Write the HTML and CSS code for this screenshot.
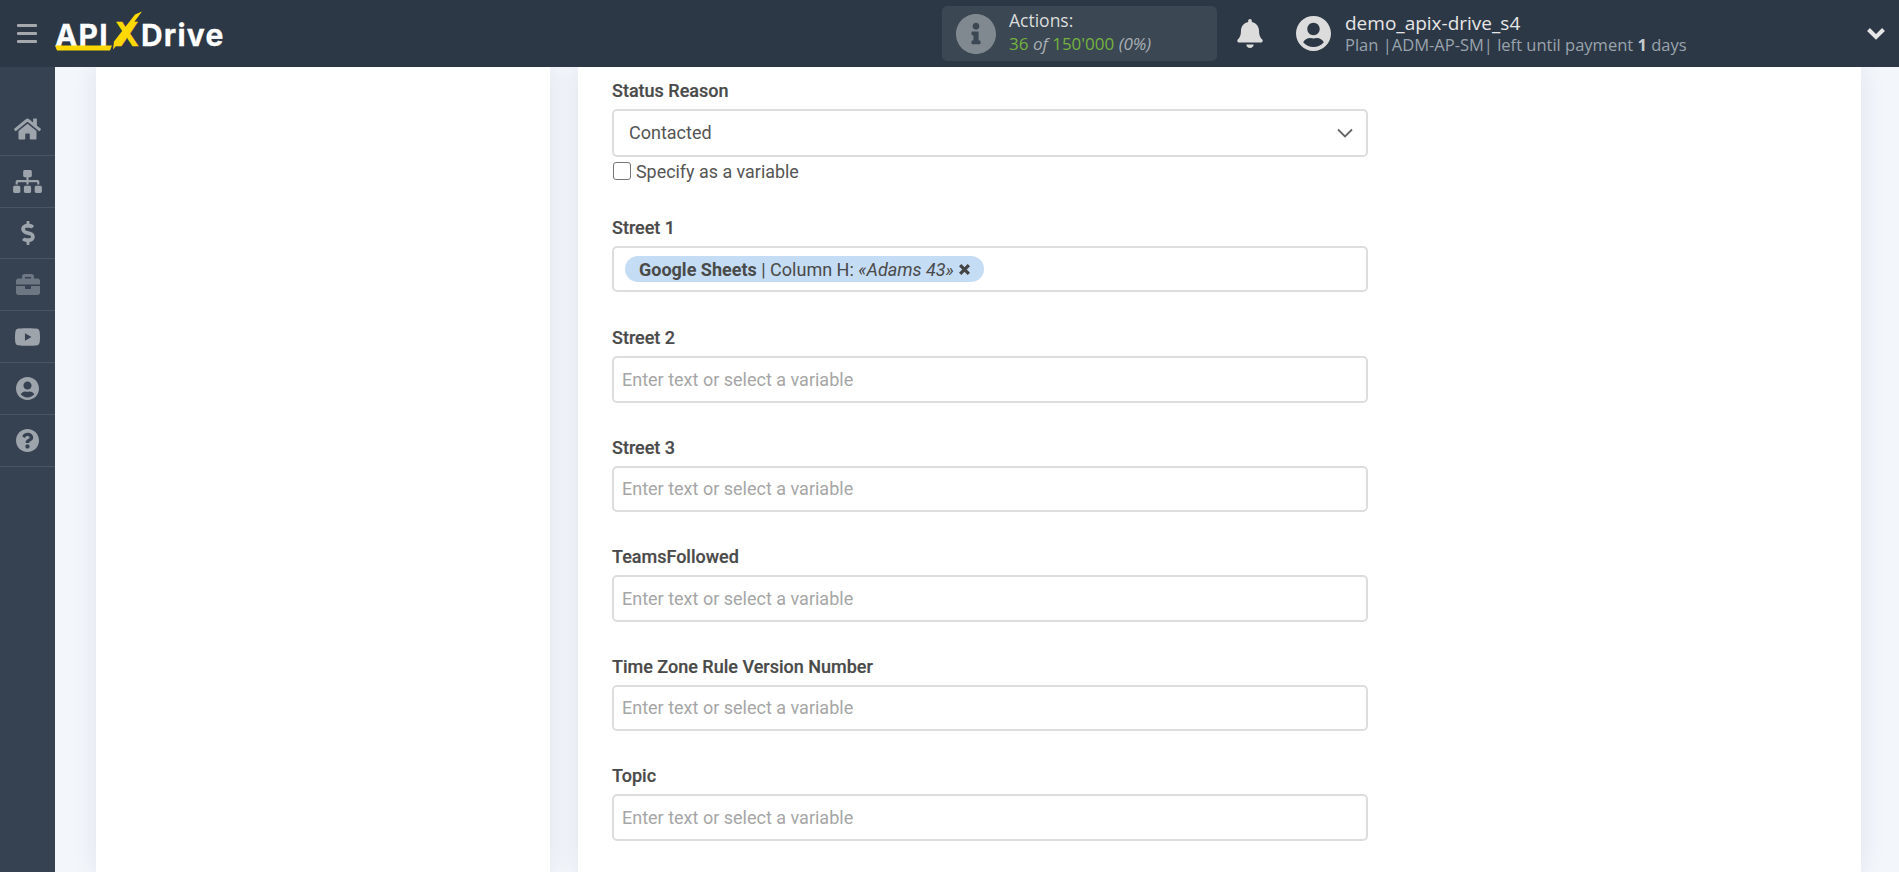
FILE: index.html
```html
<!DOCTYPE html>
<html lang="en">
<head>
<meta charset="utf-8">
<title>ApiX-Drive</title>
<link rel="stylesheet" href="styles.css">
</head>
<body>
<header class="topbar">
  <div class="topbar-left">
    <div class="burger"><span></span><span></span><span></span></div>
    <div class="logo">
      <span class="logo-api">API</span><span class="logo-x">X</span><span class="logo-drive">Drive</span>
      <svg class="logo-marks" viewBox="0 0 170 40" aria-hidden="true">
        <polygon points="0,31.5 57,31.5 55,36.5 2,36.5" fill="#ffd800"/>
        <polygon points="58,35.5 59,27.5 80,0.5 87,-2.5 64,28.5" fill="#ffd800"/>
      </svg>
    </div>
  </div>
  <div class="topbar-right">
    <div class="actions">
      <svg class="actions-icon" viewBox="8 8 496 496"><path d="M256 8C119.043 8 8 119.083 8 256c0 136.997 111.043 248 248 248s248-111.003 248-248C504 119.083 392.957 8 256 8zm0 110c23.196 0 42 18.804 42 42s-18.804 42-42 42-42-18.804-42-42 18.804-42 42-42zm56 254c0 6.627-5.373 12-12 12h-88c-6.627 0-12-5.373-12-12v-24c0-6.627 5.373-12 12-12h12v-64h-12c-6.627 0-12-5.373-12-12v-24c0-6.627 5.373-12 12-12h64c6.627 0 12 5.373 12 12v100h12c6.627 0 12 5.373 12 12v24z"/></svg>
      <div class="actions-text">
        <div class="actions-title">Actions:</div>
        <div class="actions-count"><span class="green">36</span> <em>of</em> <span class="green">150'000</span> <em>(0%)</em></div>
      </div>
    </div>
    <svg class="bell" viewBox="0 0 448 512"><path d="M224 512c35.32 0 63.97-28.65 63.97-64H160.03c0 35.35 28.65 64 63.97 64zm215.39-149.71c-19.32-20.76-55.47-51.99-55.47-154.29 0-77.7-54.48-139.9-127.94-155.16V32c0-17.67-14.32-32-31.98-32s-31.98 14.33-31.98 32v20.84C118.56 68.1 64.08 130.3 64.08 208c0 102.3-36.15 133.53-55.47 154.29-6 6.45-8.66 14.16-8.61 21.71.11 16.4 12.98 32 32.1 32h383.8c19.12 0 32-15.6 32.1-32 .05-7.55-2.61-15.27-8.61-21.71z"/></svg>
    <svg class="avatar" viewBox="0 8 496 496"><path d="M248 8C111 8 0 119 0 256s111 248 248 248 248-111 248-248S385 8 248 8zm0 96c48.6 0 88 39.4 88 88s-39.4 88-88 88-88-39.4-88-88 39.4-88 88-88zm0 344c-58.7 0-111.3-26.6-146.5-68.2 18.8-35.4 55.6-59.8 98.5-59.8 2.4 0 4.8.4 7.1 1.1 13 4.2 26.6 6.9 40.9 6.9 14.3 0 28-2.7 40.9-6.9 2.3-.7 4.7-1.1 7.1-1.1 42.9 0 79.7 24.4 98.5 59.8C359.3 421.4 306.7 448 248 448z"/></svg>
    <div class="user">
      <div class="user-name">demo_apix-drive_s4</div>
      <div class="user-plan">Plan |ADM-AP-SM| left until payment <b>1</b> days</div>
    </div>
    <svg class="user-chevron" viewBox="0 0 20 14"><polyline points="2.5,2.5 10,10 17.5,2.5"/></svg>
  </div>
</header>

<div class="body-row">
  <nav class="sidebar">
    <a class="nav-item"><svg class="nav-home" viewBox="0 0 576 512"><path d="M280.37 148.26L96 300.11V464a16 16 0 0 0 16 16l112.06-.29a16 16 0 0 0 15.92-16V368a16 16 0 0 1 16-16h64a16 16 0 0 1 16 16v95.64a16 16 0 0 0 16 16.05L464 480a16 16 0 0 0 16-16V300L295.67 148.26a12.19 12.19 0 0 0-15.3 0zM571.6 251.47L488 182.56V44.05a12 12 0 0 0-12-12h-56a12 12 0 0 0-12 12v72.61L318.47 43a48 48 0 0 0-61 0L4.34 251.47a12 12 0 0 0-1.6 16.9l25.5 31A12 12 0 0 0 45.15 301l235.22-193.74a12.19 12.19 0 0 1 15.3 0L530.9 301a12 12 0 0 0 16.9-1.6l25.5-31a12 12 0 0 0-1.7-16.93z"/></svg></a>
    <a class="nav-item"><svg class="nav-sitemap" viewBox="0 0 640 512"><path d="M128 352H32c-17.67 0-32 14.33-32 32v96c0 17.67 14.33 32 32 32h96c17.67 0 32-14.33 32-32v-96c0-17.67-14.33-32-32-32zm-24-80h192v48h48v-48h192v48h48v-57.59c0-21.17-17.23-38.41-38.41-38.41H344v-64h40c17.67 0 32-14.33 32-32V32c0-17.67-14.33-32-32-32H256c-17.67 0-32 14.33-32 32v96c0 17.67 14.33 32 32 32h40v64H94.41C73.23 224 56 241.23 56 262.41V320h48v-48zm264 80h-96c-17.67 0-32 14.33-32 32v96c0 17.67 14.33 32 32 32h96c17.67 0 32-14.33 32-32v-96c0-17.67-14.33-32-32-32zm240 0h-96c-17.67 0-32 14.33-32 32v96c0 17.67 14.33 32 32 32h96c17.67 0 32-14.33 32-32v-96c0-17.67-14.33-32-32-32z"/></svg></a>
    <a class="nav-item"><svg class="nav-dollar" viewBox="0 0 288 512"><path d="M209.2 233.4l-108-31.6C88.7 198.2 80 186.5 80 173.5c0-16.3 13.2-29.5 29.5-29.5h66.3c12.2 0 24.2 3.7 34.2 10.5 6.1 4.1 14.3 3.1 19.5-2l34.8-34c7.1-6.9 6.1-18.4-1.8-24.5C238 74.8 207.4 64.1 176 64V16c0-8.8-7.2-16-16-16h-32c-8.8 0-16 7.2-16 16v48h-2.5C45.8 64-5.4 118.7.5 183.6c4.2 46.1 39.4 83.6 83.8 96.6l102.5 30c12.5 3.7 21.2 15.3 21.2 28.3 0 16.3-13.2 29.5-29.5 29.5h-66.3C100 368 88 364.3 78 357.5c-6.1-4.1-14.3-3.1-19.5 2l-34.8 34c-7.1 6.9-6.1 18.4 1.8 24.5 24.5 19.2 55.1 29.9 86.5 30v48c0 8.8 7.2 16 16 16h32c8.8 0 16-7.2 16-16v-48.2c46.6-.9 90.3-28.6 105.7-72.7 21.5-61.6-14.6-124.8-72.5-141.7z"/></svg></a>
    <a class="nav-item"><svg class="nav-case" viewBox="0 32 512 448"><path d="M320 336c0 8.84-7.16 16-16 16h-96c-8.84 0-16-7.16-16-16v-48H0v144c0 25.6 22.4 48 48 48h416c25.6 0 48-22.4 48-48V288H320v48zm144-208h-80V80c0-25.6-22.4-48-48-48H176c-25.6 0-48 22.4-48 48v48H48c-25.6 0-48 22.4-48 48v80h512v-80c0-25.6-22.4-48-48-48zm-144 0H192V96h128v32z"/></svg></a>
    <a class="nav-item"><svg class="nav-youtube" viewBox="15 64 546 384"><path d="M549.655 124.083c-6.281-23.65-24.787-42.276-48.284-48.597C458.781 64 288 64 288 64S117.22 64 74.629 75.486c-23.497 6.322-42.003 24.947-48.284 48.597-11.412 42.867-11.412 132.305-11.412 132.305s0 89.438 11.412 132.305c6.281 23.65 24.787 41.5 48.284 47.821C117.22 448 288 448 288 448s170.78 0 213.371-11.486c23.497-6.321 42.003-24.171 48.284-47.821 11.412-42.867 11.412-132.305 11.412-132.305s0-89.438-11.412-132.305zm-317.51 213.508V175.185l142.739 81.205-142.739 81.201z"/></svg></a>
    <a class="nav-item"><svg class="nav-user" viewBox="0 8 496 496"><path d="M248 8C111 8 0 119 0 256s111 248 248 248 248-111 248-248S385 8 248 8zm0 96c48.6 0 88 39.4 88 88s-39.4 88-88 88-88-39.4-88-88 39.4-88 88-88zm0 344c-58.7 0-111.3-26.6-146.5-68.2 18.8-35.4 55.6-59.8 98.5-59.8 2.4 0 4.8.4 7.1 1.1 13 4.2 26.6 6.9 40.9 6.9 14.3 0 28-2.7 40.9-6.9 2.3-.7 4.7-1.1 7.1-1.1 42.9 0 79.7 24.4 98.5 59.8C359.3 421.4 306.7 448 248 448z"/></svg></a>
    <a class="nav-item"><svg class="nav-help" viewBox="8 8 496 496"><path d="M504 256c0 136.997-111.043 248-248 248S8 392.997 8 256C8 119.083 119.043 8 256 8s248 111.083 248 248zM262.655 90c-54.497 0-89.255 22.957-116.549 63.758-3.536 5.286-2.353 12.415 2.715 16.258l34.699 26.31c5.205 3.947 12.621 3.008 16.665-2.122 17.864-22.658 30.113-35.797 57.303-35.797 20.429 0 45.698 13.148 45.698 32.958 0 14.976-12.363 22.667-32.534 33.976C247.128 238.528 216 254.941 216 296v4c0 6.627 5.373 12 12 12h56c6.627 0 12-5.373 12-12v-1.333c0-28.462 83.186-29.647 83.186-106.667 0-58.002-60.165-102-116.531-102zM256 338c-25.365 0-46 20.635-46 46 0 25.364 20.635 46 46 46s46-20.636 46-46c0-25.365-20.635-46-46-46z"/></svg></a>
  </nav>

  <div class="workspace">
    <aside class="side-card"></aside>
    <main class="main-card">
      <div class="field field-select">
        <label class="field-label">Status Reason</label>
        <div class="select-box">
          <span>Contacted</span>
          <svg class="select-chevron" viewBox="0 0 16 10"><polyline points="1,1.5 8,8.5 15,1.5"/></svg>
        </div>
        <div class="check-row"><span class="checkbox"></span><span class="check-text">Specify as a variable</span></div>
      </div>
      <div class="field field-tags">
        <label class="field-label">Street 1</label>
        <div class="text-box tags">
          <span class="chip"><b>Google Sheets</b> | Column H: <i>«Adams 43»</i><svg class="chip-x" viewBox="0 0 12 12"><path d="M2 2l8 8M10 2l-8 8"/></svg></span>
        </div>
      </div>
      <div class="field">
        <label class="field-label">Street 2</label>
        <div class="text-box placeholder">Enter text or select a variable</div>
      </div>
      <div class="field">
        <label class="field-label">Street 3</label>
        <div class="text-box placeholder">Enter text or select a variable</div>
      </div>
      <div class="field">
        <label class="field-label">TeamsFollowed</label>
        <div class="text-box placeholder">Enter text or select a variable</div>
      </div>
      <div class="field">
        <label class="field-label">Time Zone Rule Version Number</label>
        <div class="text-box placeholder">Enter text or select a variable</div>
      </div>
      <div class="field">
        <label class="field-label">Topic</label>
        <div class="text-box placeholder">Enter text or select a variable</div>
      </div>
    </main>
  </div>
</div>
</body>
</html>
```

FILE: styles.css
```css
* { box-sizing: border-box; }
html, body { margin: 0; height: 100%; overflow: hidden; }
body { display: flex; flex-direction: column; font-family: "Roboto", sans-serif; color: #4a4a4a; background: #f3f6fb; }

/* top bar */
.topbar { flex: 0 0 67px; display: flex; align-items: center; justify-content: space-between; background: #2c3845; color: #e6e6e6; font-family: "Open Sans", sans-serif; position: relative; z-index: 2; }
.topbar-left { display: flex; align-items: center; }
.burger { width: 20px; margin-left: 17px; display: flex; flex-direction: column; gap: 5px; }
.burger span { display: block; height: 3px; border-radius: 1px; background: #a5a9ae; }
.logo { position: relative; margin-left: 18px; height: 40px; width: 170px; display: flex; align-items: baseline; font-family: "Inter", sans-serif; font-weight: 700; font-size: 30px; line-height: 40px; color: #fff; -webkit-text-stroke: 0.3px currentColor; }
.logo-api { width: 58px; letter-spacing: 1.2px; }
.logo-x { width: 28px; color: #ffd800; font-size: 33px; text-align: center; }
.logo-drive { letter-spacing: 1.2px; }
.logo-marks { position: absolute; left: 0; top: 0; width: 170px; height: 40px; overflow: visible; }

.topbar-right { display: flex; align-items: center; }
.actions { width: 275px; height: 55px; display: flex; align-items: center; background: #3b4853; border-radius: 5px; padding-left: 14px; }
.actions-icon { width: 40px; height: 40px; fill: #808890; }
.actions-text { margin-left: 13px; padding-bottom: 4px; font-size: 17px; line-height: 23px; }
.actions-title { color: #dcdcdc; font-size: 17.5px; }
.actions-count { color: #a9afb5; white-space: nowrap; font-size: 17px; }
.green { color: #75b23f; }
.bell { width: 26px; height: 29px; margin-left: 20px; fill: #dcdcdc; }
.avatar { width: 35px; height: 35px; margin-left: 33px; fill: #dcdcdc; }
.user { margin-left: 14px; width: 521px; line-height: 21px; }
.user-name { color: #e6e6e6; font-size: 19px; }
.user-plan { color: #9aa3ad; font-size: 16.5px; white-space: nowrap; }
.user-plan b { color: #c5c9cd; }
.user-chevron { width: 20px; height: 14px; margin-right: 13px; fill: none; stroke: #e6e6e6; stroke-width: 4; }

/* body */
.body-row { flex: 1; display: flex; min-height: 0; }
.sidebar { flex: 0 0 55px; background: #364151; padding-top: 37px; }
.nav-item { display: flex; align-items: center; justify-content: center; height: 51.83px; border-bottom: 1px solid #4a5563; }
.nav-item svg { fill: #9ea4ab; display: block; }
.nav-home { width: 27px; height: 24px; }
.nav-sitemap { width: 29px; height: 23px; }
.nav-dollar { width: 14px; height: 24px; }
.nav-case { width: 24px; height: 21px; fill: #6d7783 !important; }
.nav-youtube { width: 25px; height: 18px; }
.nav-user { width: 23px; height: 23px; }
.nav-help { width: 23px; height: 23px; }

.workspace { flex: 1; display: flex; padding-left: 41px; min-width: 0; overflow: hidden; }
.side-card { flex: 0 0 454px; background: #fff; box-shadow: 0 0 24px rgba(30, 50, 90, 0.09); }
.main-card { flex: 0 0 1283px; margin-left: 28px; background: #fff; padding: 13px 0 0 34px; box-shadow: 0 0 24px rgba(30, 50, 90, 0.09); }

/* form */
.field { width: 756px; margin-bottom: 34.25px; }
.field-select { margin-bottom: 37px; }
.field-tags { margin-bottom: 35.25px; }
.field-label { display: block; height: 20px; margin-bottom: 8.75px; font-size: 18px; font-weight: 500; line-height: 22px; color: #4a4a4a; -webkit-text-stroke: 0.2px #4a4a4a; white-space: nowrap; }
.select-box { height: 48px; display: flex; align-items: center; justify-content: space-between; padding: 0 13px 0 15px; border: 2px solid #dddddd; border-radius: 5px; font-size: 18px; color: #555; }
.select-chevron { width: 16px; height: 10px; fill: none; stroke: #666; stroke-width: 1.8; }
.check-row { display: flex; align-items: center; gap: 5px; height: 18px; margin-top: 5px; padding-left: 1px; font-size: 17.9px; color: #555; }
.check-text { padding-top: 2px; }
.checkbox { width: 18px; height: 18px; border: 1.5px solid #767676; border-radius: 3px; background: #fff; }
.text-box { height: 46.5px; border: 2px solid #dddddd; border-radius: 5px; display: flex; align-items: center; font-size: 18px; }
.placeholder { padding-left: 8px; color: #a6a6a6; }
.tags { padding-left: 11px; }
.chip { height: 26px; display: inline-flex; align-items: center; padding: 2px 13px 0 14px; background: #c5dcf5; border-radius: 13px; font-size: 18px; color: #4a4a4a; white-space: pre; }
.chip-x { width: 13px; height: 13px; margin-left: 4px; margin-top: -1px; fill: none; stroke: #444; stroke-width: 3; }
```
